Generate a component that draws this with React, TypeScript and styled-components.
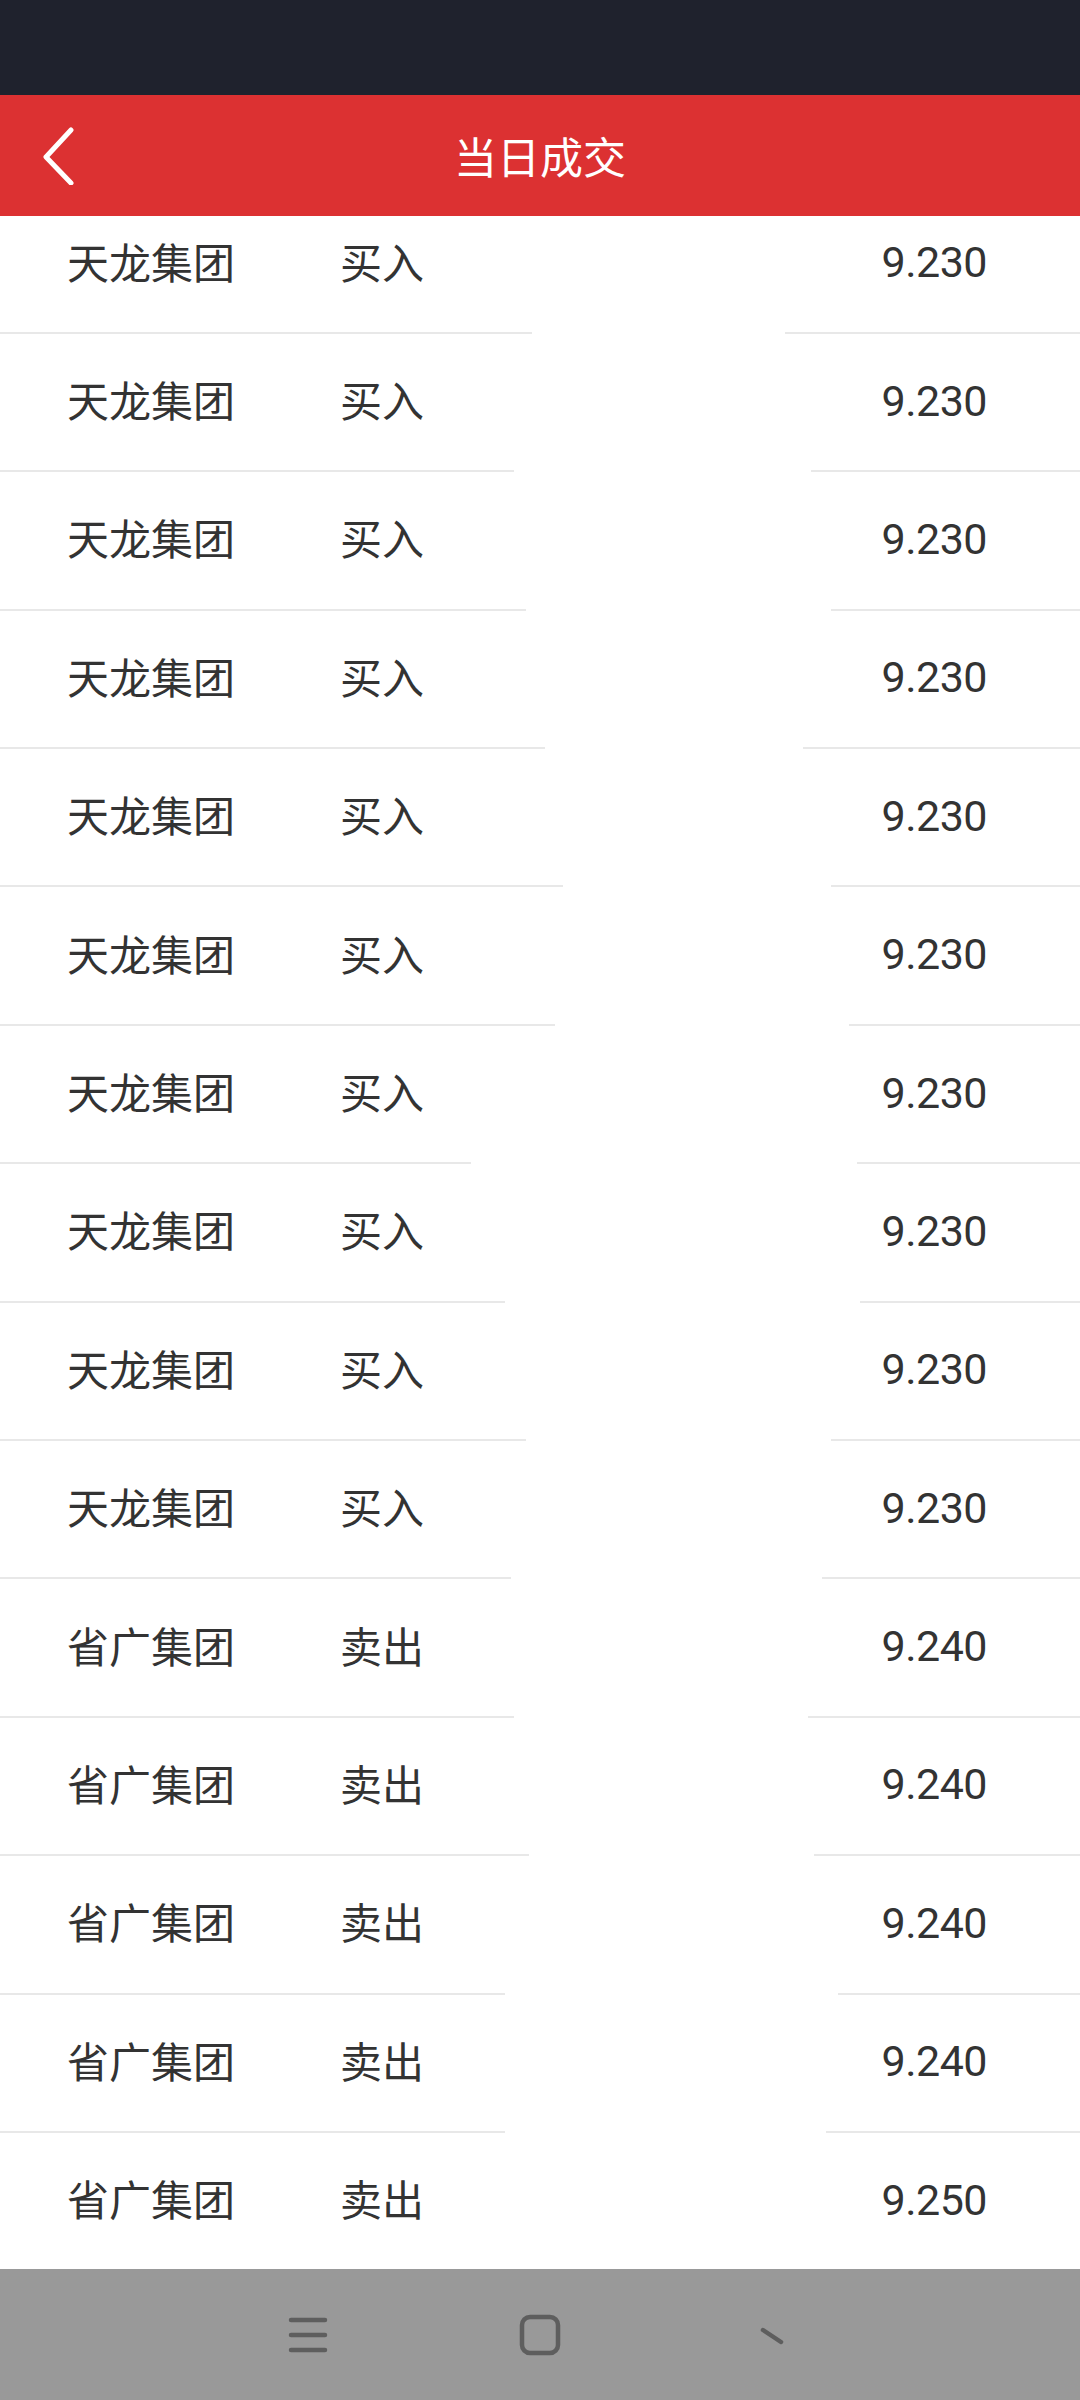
import React from 'react';
import styled, { createGlobalStyle } from 'styled-components';

const Global = createGlobalStyle`
  html, body { margin: 0; padding: 0; background: #fff; }
  body { font-family: Roboto, "Noto Sans CJK SC", sans-serif; }
`;

export const Page = styled.div`
  width: 1080px;
  height: 2400px;
  display: flex;
  flex-direction: column;
  overflow: hidden;
`;

export const StatusBar = styled.div`
  height: 95px;
  background: #1f222d;
  flex-shrink: 0;
`;

export const Header = styled.header`
  height: 121px;
  background: #dc3132;
  flex-shrink: 0;
  display: flex;
  align-items: center;
  justify-content: center;
  position: relative;
`;

export const BackBtn = styled.button`
  position: absolute;
  left: 30px;
  top: 28px;
  width: 56px;
  height: 64px;
  border: 0;
  padding: 0;
  background: transparent;
  display: flex;
  align-items: center;
  justify-content: center;
`;

export const Title = styled.h1`
  margin: 0;
  color: #fff;
  font-family: "Noto Sans CJK SC", sans-serif;
  font-weight: 400;
  font-size: 43px;
  line-height: 1;
`;

export const List = styled.div`
  flex: 1;
  overflow: hidden;
`;

export const Inner = styled.div`
  margin-top: -20.5px;
`;

export const Row = styled.div<{ $from: number; $to: number }>`
  height: 138.4px;
  box-sizing: border-box;
  display: grid;
  grid-template-columns: 273px 1fr auto;
  align-items: center;
  padding: 0 93px 0 67px;
  position: relative;
  color: #333;
  &::after {
    content: '';
    position: absolute;
    left: 0;
    right: 0;
    bottom: 0;
    height: 2px;
    background: linear-gradient(
      to right,
      #e8e8e8 0,
      #e8e8e8 ${(p) => p.$from}px,
      transparent ${(p) => p.$from}px,
      transparent ${(p) => p.$to}px,
      #e8e8e8 ${(p) => p.$to}px
    );
  }
`;

export const Name = styled.span`
  font-family: "Noto Sans CJK SC", sans-serif;
  font-size: 42px;
  line-height: 1;
  position: relative;
  top: -4px;
`;

export const Side = styled(Name)``;

export const Price = styled.span`
  font-family: Roboto, sans-serif;
  font-size: 43px;
  line-height: 1;
  text-align: right;
  letter-spacing: -0.5px;
  position: relative;
  top: -2px;
`;

export const NavBar = styled.div`
  height: 131px;
  flex-shrink: 0;
  background: #999999;
  display: flex;
  align-items: center;
  justify-content: center;
`;

export const NavKey = styled.div`
  width: 232px;
  height: 80px;
  display: flex;
  align-items: center;
  justify-content: center;
`;

type Trade = { name: string; side: string; price: string; gap: [number, number] };

// where the divider under each row is hidden
const gaps: [number, number][] = [
  [532, 785],
  [514, 811],
  [526, 831],
  [545, 803],
  [563, 831],
  [555, 849],
  [471, 857],
  [505, 860],
  [526, 831],
  [511, 822],
  [514, 808],
  [529, 814],
  [505, 838],
  [505, 826],
  [1080, 1080],
];

const trades: Trade[] = gaps.map((gap, i) => {
  if (i < 10) return { name: '天龙集团', side: '买入', price: '9.230', gap };
  if (i < 14) return { name: '省广集团', side: '卖出', price: '9.240', gap };
  return { name: '省广集团', side: '卖出', price: '9.250', gap };
});

const App = () => {
  return (
    <>
      <Global />
      <Page>
        <StatusBar />
        <Header>
          <BackBtn aria-label="返回">
            <svg width="40" height="60" viewBox="0 0 40 60">
              <polyline
                points="33,5 8,32 33,58"
                fill="none"
                stroke="#fff"
                strokeWidth="5"
                strokeLinecap="round"
                strokeLinejoin="round"
              />
            </svg>
          </BackBtn>
          <Title>当日成交</Title>
        </Header>
        <List>
          <Inner>
            {trades.map((t, i) => (
              <Row key={i} $from={t.gap[0]} $to={t.gap[1]}>
                <Name>{t.name}</Name>
                <Side>{t.side}</Side>
                <Price>{t.price}</Price>
              </Row>
            ))}
          </Inner>
        </List>
        <NavBar>
          <NavKey>
            <svg width="40" height="40" viewBox="0 0 40 40">
              <g stroke="#5e5e5e" strokeWidth="4.5" strokeLinecap="round">
                <line x1="3" y1="5" x2="37" y2="5" />
                <line x1="3" y1="20" x2="37" y2="20" />
                <line x1="3" y1="35" x2="37" y2="35" />
              </g>
            </svg>
          </NavKey>
          <NavKey>
            <svg width="42" height="42" viewBox="0 0 42 42">
              <rect x="3" y="3" width="36" height="36" rx="8" fill="none" stroke="#5e5e5e" strokeWidth="4.5" />
            </svg>
          </NavKey>
          <NavKey>
            <svg width="42" height="42" viewBox="0 0 42 42">
              <line x1="12" y1="16" x2="30" y2="28" stroke="#5e5e5e" strokeWidth="4.5" strokeLinecap="round" />
            </svg>
          </NavKey>
        </NavBar>
      </Page>
    </>
  );
};

export default App;
